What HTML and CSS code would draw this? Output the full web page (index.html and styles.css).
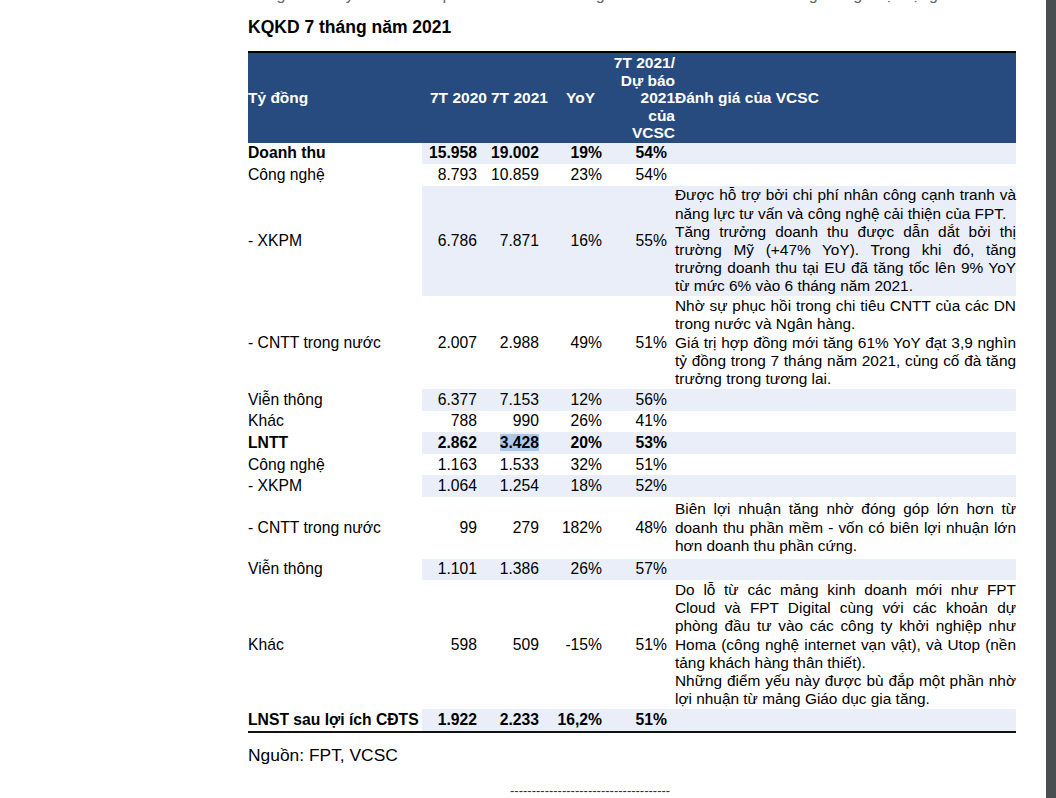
FILE: index.html
```html
<!DOCTYPE html>
<html lang="vi">
<head>
<meta charset="utf-8">
<title>KQKD 7 tháng năm 2021</title>
<link rel="stylesheet" href="styles.css">
</head>
<body>
<div class="viewer">
  <main class="page">
    <p class="lead">Bảng dưới đây tóm tắt kết quả kinh doanh 7 tháng năm 2021 của FPT theo từng mảng hoạt động.</p>
    <h2 class="title">KQKD 7 tháng năm 2021</h2>
    <table class="kq">
      <colgroup>
        <col class="c1"><col class="c2"><col class="c3"><col class="c4"><col class="c5"><col class="c6">
      </colgroup>
      <thead>
        <tr>
          <th class="l">Tỷ đồng</th>
          <th class="c">7T 2020</th>
          <th class="c">7T 2021</th>
          <th class="c">YoY</th>
          <th class="r">7T 2021/<br>Dự báo<br>2021<br>của<br>VCSC</th>
          <th class="l">Đánh giá của VCSC</th>
        </tr>
      </thead>
      <tbody>
        <tr class="sh b"><td>Doanh thu</td><td class="n">15.958</td><td class="n">19.002</td><td class="n">19%</td><td class="n p">54%</td><td class="cm"></td></tr>
        <tr><td>Công nghệ</td><td class="n">8.793</td><td class="n">10.859</td><td class="n">23%</td><td class="n p">54%</td><td class="cm"></td></tr>
        <tr class="sh"><td>- XKPM</td><td class="n">6.786</td><td class="n">7.871</td><td class="n">16%</td><td class="n p">55%</td>
          <td class="cm">
            <span class="ln j">Được hỗ trợ bởi chi phí nhân công cạnh tranh và</span>
            <span class="ln">năng lực tư vấn và công nghệ cải thiện của FPT.</span>
            <span class="ln j">Tăng trưởng doanh thu được dẫn dắt bởi thị</span>
            <span class="ln j">trường Mỹ (+47% YoY). Trong khi đó, tăng</span>
            <span class="ln j">trưởng doanh thu tại EU đã tăng tốc lên 9% YoY</span>
            <span class="ln">từ mức 6% vào 6 tháng năm 2021.</span>
          </td></tr>
        <tr><td>- CNTT trong nước</td><td class="n">2.007</td><td class="n">2.988</td><td class="n">49%</td><td class="n p">51%</td>
          <td class="cm">
            <span class="ln j">Nhờ sự phục hồi trong chi tiêu CNTT của các DN</span>
            <span class="ln">trong nước và Ngân hàng.</span>
            <span class="ln j">Giá trị hợp đồng mới tăng 61% YoY đạt 3,9 nghìn</span>
            <span class="ln j">tỷ đồng trong 7 tháng năm 2021, củng cố đà tăng</span>
            <span class="ln">trưởng trong tương lai.</span>
          </td></tr>
        <tr class="sh"><td>Viễn thông</td><td class="n">6.377</td><td class="n">7.153</td><td class="n">12%</td><td class="n p">56%</td><td class="cm"></td></tr>
        <tr><td>Khác</td><td class="n">788</td><td class="n">990</td><td class="n">26%</td><td class="n p">41%</td><td class="cm"></td></tr>
        <tr class="sh b"><td>LNTT</td><td class="n">2.862</td><td class="n"><span class="sel">3.428</span></td><td class="n">20%</td><td class="n p">53%</td><td class="cm"></td></tr>
        <tr><td>Công nghệ</td><td class="n">1.163</td><td class="n">1.533</td><td class="n">32%</td><td class="n p">51%</td><td class="cm"></td></tr>
        <tr class="sh"><td>- XKPM</td><td class="n">1.064</td><td class="n">1.254</td><td class="n">18%</td><td class="n p">52%</td><td class="cm"></td></tr>
        <tr><td>- CNTT trong nước</td><td class="n">99</td><td class="n">279</td><td class="n">182%</td><td class="n p">48%</td>
          <td class="cm loose">
            <span class="ln j">Biên lợi nhuận tăng nhờ đóng góp lớn hơn từ</span>
            <span class="ln j">doanh thu phần mềm - vốn có biên lợi nhuận lớn</span>
            <span class="ln">hơn doanh thu phần cứng.</span>
          </td></tr>
        <tr class="sh"><td>Viễn thông</td><td class="n">1.101</td><td class="n">1.386</td><td class="n">26%</td><td class="n p">57%</td><td class="cm"></td></tr>
        <tr><td>Khác</td><td class="n">598</td><td class="n">509</td><td class="n">-15%</td><td class="n p">51%</td>
          <td class="cm">
            <span class="ln j">Do lỗ từ các mảng kinh doanh mới như FPT</span>
            <span class="ln j">Cloud và FPT Digital cùng với các khoản dự</span>
            <span class="ln j">phòng đầu tư vào các công ty khởi nghiệp như</span>
            <span class="ln j">Homa (công nghệ internet vạn vật), và Utop (nền</span>
            <span class="ln">tảng khách hàng thân thiết).</span>
            <span class="ln j">Những điểm yếu này được bù đắp một phần nhờ</span>
            <span class="ln">lợi nhuận từ mảng Giáo dục gia tăng.</span>
          </td></tr>
        <tr class="sh b"><td>LNST sau lợi ích CĐTS</td><td class="n">1.922</td><td class="n">2.233</td><td class="n">16,2%</td><td class="n p">51%</td><td class="cm"></td></tr>
      </tbody>
    </table>
    <p class="src">Nguồn: FPT, VCSC</p>
    <p class="dash">-------------------------------------</p>
  </main>
  <div class="edge"></div>
</div>
</body>
</html>
```

FILE: styles.css
```css
html, body {
  margin: 0;
  padding: 0;
  background: #ffffff;
}

body {
  font-family: "Liberation Sans", Arial, sans-serif;
  color: #000;
}

.viewer {
  display: flex;
  height: 798px;
  overflow: hidden;
}

.page {
  flex: 1;
  padding-left: 248px;
  overflow: hidden;
}

.edge {
  width: 10px;
  background: #4b4e51;
}

.lead {
  margin: -14px 0 0 0;
  font-size: 16px;
  line-height: 18px;
  color: #666;
  white-space: nowrap;
}

.title {
  margin: 13px 0 0 0;
  font-size: 17.5px;
  line-height: 20px;
  font-weight: bold;
}

.kq {
  margin-top: 14px;
  width: 768px;
  border-collapse: collapse;
  table-layout: fixed;
  font-size: 15.7px;
  line-height: 18.2px;
  border-top: 2px solid #000;
  border-bottom: 2px solid #111;
}

.c1 { width: 174px; }
.c2 { width: 61px; }
.c3 { width: 62px; }
.c4 { width: 63px; }
.c5 { width: 67px; }
.c6 { width: 341px; }

.kq th {
  background: #274b7e;
  color: #fff;
  font-weight: bold;
  font-size: 15.5px;
  line-height: 17.5px;
  padding: 1px 0;
  vertical-align: middle;
  white-space: nowrap;
}

.kq th.l { text-align: left; }
.kq th.c { text-align: center; padding-left: 8px; }
.kq th.r { text-align: right; }

.kq td {
  padding: 1.7px 0;
  vertical-align: middle;
  white-space: nowrap;
}

.kq td.n {
  text-align: right;
  padding-right: 6px;
}

.kq td.n.p {
  padding-right: 8px;
}

.kq tr.b td {
  font-weight: bold;
}

.kq tr.sh td + td {
  background: #e9eef8;
}

.kq td.cm {
  padding: 0.8px 0;
  font-size: 15.4px;
  text-align: left;
}

.kq td.cm.loose {
  padding: 3.5px 0;
}

.ln {
  display: block;
  white-space: nowrap;
}

.ln.j {
  text-align: justify;
  text-align-last: justify;
}

.sel {
  background: #adc7ea;
}

.src {
  margin: 12px 0 0 0;
  font-size: 17.4px;
  line-height: 20px;
}

.dash {
  margin: 20px 0 0 262px;
  font-size: 13px;
  line-height: 12px;
  color: #333;
  white-space: nowrap;
}
```
